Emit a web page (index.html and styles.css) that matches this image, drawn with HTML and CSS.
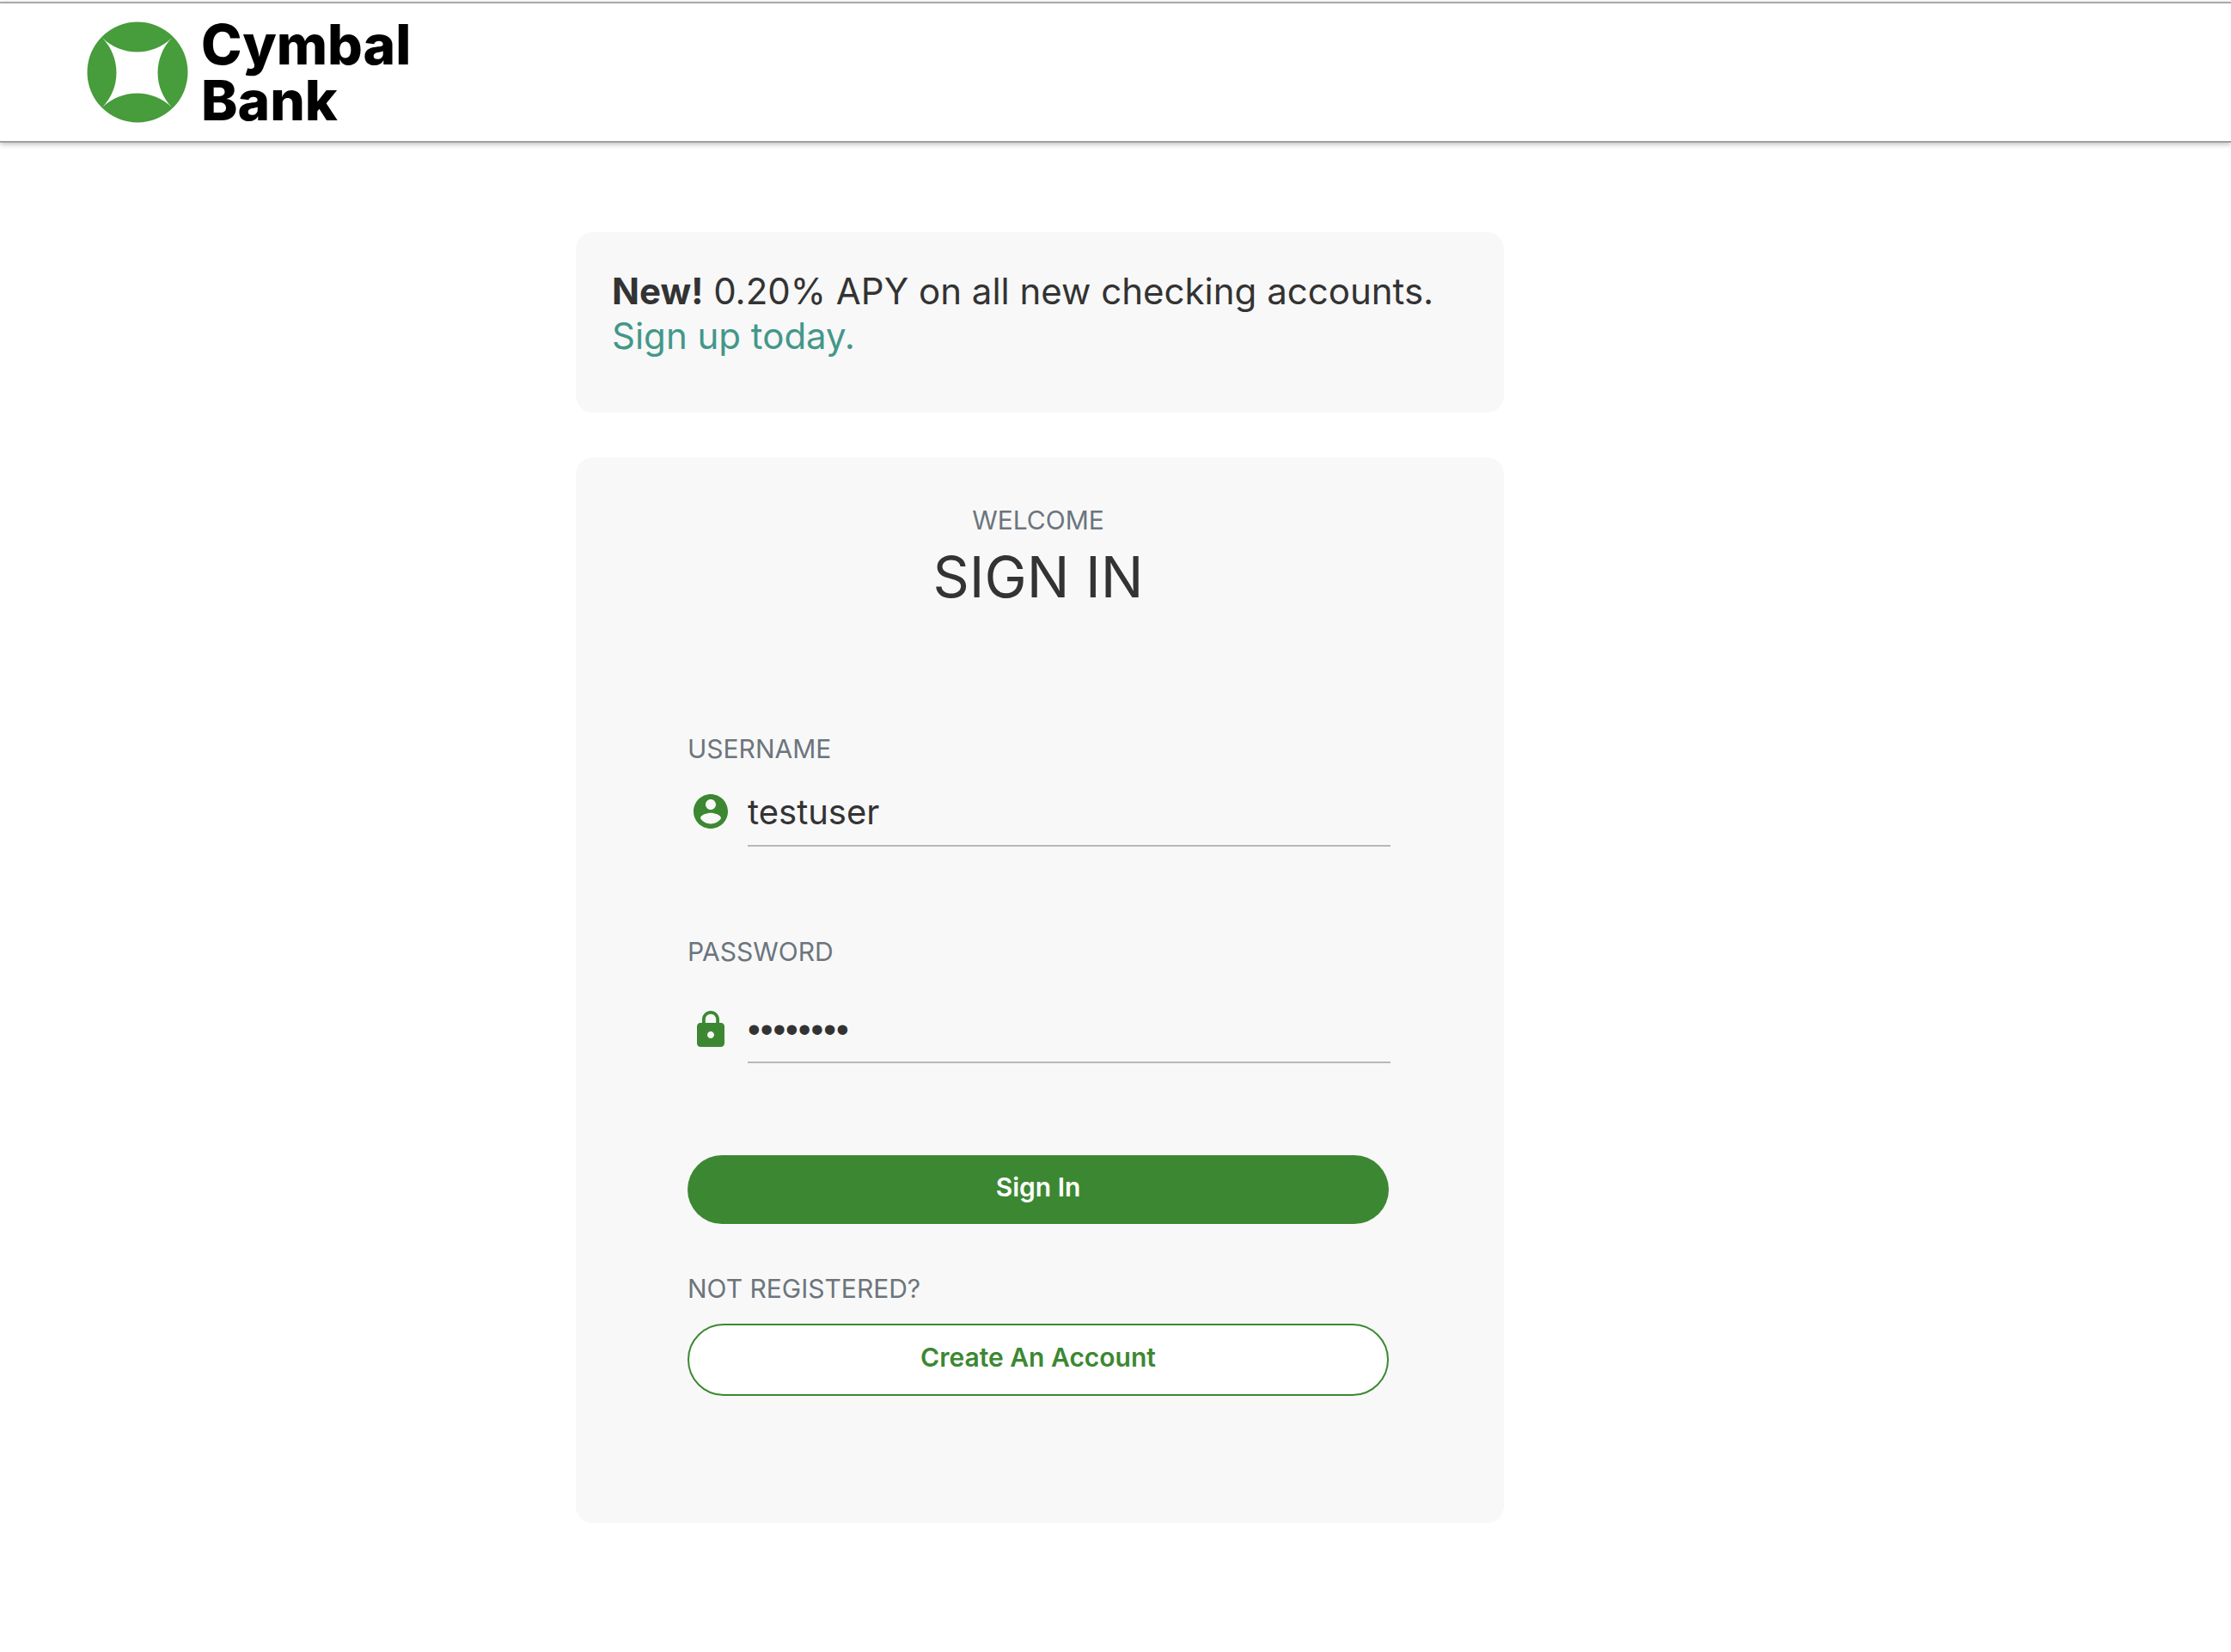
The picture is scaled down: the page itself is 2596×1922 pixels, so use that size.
FILE: index.html
```
<!DOCTYPE html>
<html lang="en">
<head>
  <meta charset="utf-8">
  <meta name="viewport" content="width=device-width, initial-scale=1">
  <title>Cymbal Bank</title>
  <link rel="stylesheet" href="styles.css">
</head>
<body>
  <header class="navbar">
    <a class="brand" href="#">
      <svg class="brand-mark" viewBox="0 0 118 118" aria-hidden="true">
        <circle cx="59" cy="59" r="58.5" fill="#479c3b"/>
        <path fill="#fff" d="M18 19A58 58 0 0 0 99 19A58 58 0 0 0 99 100A58 58 0 0 0 18 100A58 58 0 0 0 18 19Z"/>
      </svg>
      <span class="brand-name">Cymbal<br>Bank</span>
    </a>
  </header>

  <main class="page">
    <div class="shell">
      <section class="card announcement">
        <p><strong>New!</strong> 0.20% APY on all new checking accounts.<br>
        <a href="#">Sign up today.</a></p>
      </section>

      <section class="card login">
        <p class="caption welcome">WELCOME</p>
        <h1 class="title">SIGN IN</h1>

        <form>
          <div class="field">
            <label class="caption" for="username">USERNAME</label>
            <div class="control">
              <svg class="icon" viewBox="0 0 24 24" aria-hidden="true">
                <path d="M12 2C6.480 2 2 6.480 2 12s4.480 10 10 10 10-4.480 10-10S17.520 2 12 2zm0 3c1.660 0 3 1.340 3 3s-1.340 3-3 3-3-1.340-3-3 1.340-3 3-3zm0 14.200c-2.500 0-4.710-1.280-6-3.220.030-1.990 4-3.080 6-3.080 1.990 0 5.970 1.090 6 3.080-1.290 1.940-3.500 3.220-6 3.220z"/>
              </svg>
              <input id="username" type="text" value="testuser">
            </div>
          </div>

          <div class="field field-password">
            <label class="caption" for="password">PASSWORD</label>
            <div class="control">
              <svg class="icon" viewBox="0 0 24 24" aria-hidden="true">
                <path d="M18 8h-1V6c0-2.760-2.240-5-5-5S7 3.240 7 6v2H6c-1.100 0-2 .9-2 2v10c0 1.100.9 2 2 2h12c1.100 0 2-.9 2-2V10c0-1.100-.9-2-2-2zm-6 9c-1.100 0-2-.9-2-2s.9-2 2-2 2 .9 2 2-.9 2-2 2zm3.100-9H8.900V6c0-1.710 1.390-3.100 3.100-3.100 1.710 0 3.100 1.390 3.100 3.100v2z"/>
              </svg>
              <input id="password" type="password" value="password">
            </div>
          </div>

          <button class="btn btn-primary" type="submit">Sign In</button>
          <p class="caption register">NOT REGISTERED?</p>
          <button class="btn btn-outline" type="button">Create An Account</button>
        </form>
      </section>
    </div>
  </main>
</body>
</html>
```
FILE: styles.css
```
* {
  box-sizing: border-box;
}

body {
  margin: 0;
  background: #fff;
  color: #333;
  font-family: Inter, "Liberation Sans", sans-serif;
}

p,
h1 {
  margin: 0;
}

.navbar {
  display: flex;
  margin-top: 2px;
  padding: 15px 101px;
  border-top: 2px solid #a9a9a9;
  border-bottom: 2px solid #a0a0a0;
  box-shadow: 0 2px 6px rgba(0, 0, 0, 0.25);
}

.brand {
  display: flex;
  align-items: center;
  gap: 15px;
  color: #000;
  text-decoration: none;
}

.brand-mark {
  width: 118px;
  height: 118px;
}

.brand-name {
  font-size: 64px;
  font-weight: 800;
  line-height: 65px;
}

.page {
  padding: 104px 176px 150px 0;
}

.shell {
  display: grid;
  gap: 52px;
  max-width: 1080px;
  margin: 0 auto;
}

.card {
  border-radius: 20px;
  background: #f8f8f8;
}

.announcement {
  padding: 43px 42px 63px;
  font-size: 42px;
  line-height: 52px;
}

.announcement a {
  color: #43978a;
  text-decoration: none;
}

.login {
  padding: 53px 134px 148px 130px;
}

.caption {
  display: block;
  color: #6c757d;
  font-size: 30px;
  line-height: 40px;
}

.welcome {
  text-align: center;
}

.title {
  margin: 10px 0 144px;
  font-size: 66px;
  font-weight: 400;
  line-height: 72px;
  text-align: center;
}

.field {
  display: grid;
  gap: 25px;
  margin-bottom: 102px;
}

.field-password {
  gap: 43px;
  margin-bottom: 107px;
}

.control {
  display: flex;
  gap: 19px;
  margin-right: -2px;
  padding-left: 3px;
}

.icon {
  flex: none;
  width: 48px;
  height: 48px;
  margin-top: 4px;
  fill: #3c8832;
}

.control input {
  flex: 1;
  min-width: 0;
  height: 69px;
  padding: 0 0 11px;
  border: 0;
  border-bottom: 2px solid #b8b8b8;
  outline: 0;
  background: transparent;
  color: #333;
  font: 400 40px/56px Inter, "Liberation Sans", sans-serif;
}

.control input[type="password"] {
  height: 67px;
  padding-bottom: 9px;
  font: 400 42px/56px "Liberation Sans", Arial, sans-serif;
}

.btn {
  display: block;
  width: 100%;
  padding: 17px 24px 23px;
  border: 0;
  border-radius: 42px;
  font: 600 30px/40px Inter, "Liberation Sans", sans-serif;
  cursor: pointer;
}

.btn-primary {
  background: #3c8832;
  color: #fff;
}

.register {
  margin: 55px 0 21px;
}

.btn-outline {
  border: 2px solid #3c8832;
  background: #fff;
  color: #3c8832;
}
```
